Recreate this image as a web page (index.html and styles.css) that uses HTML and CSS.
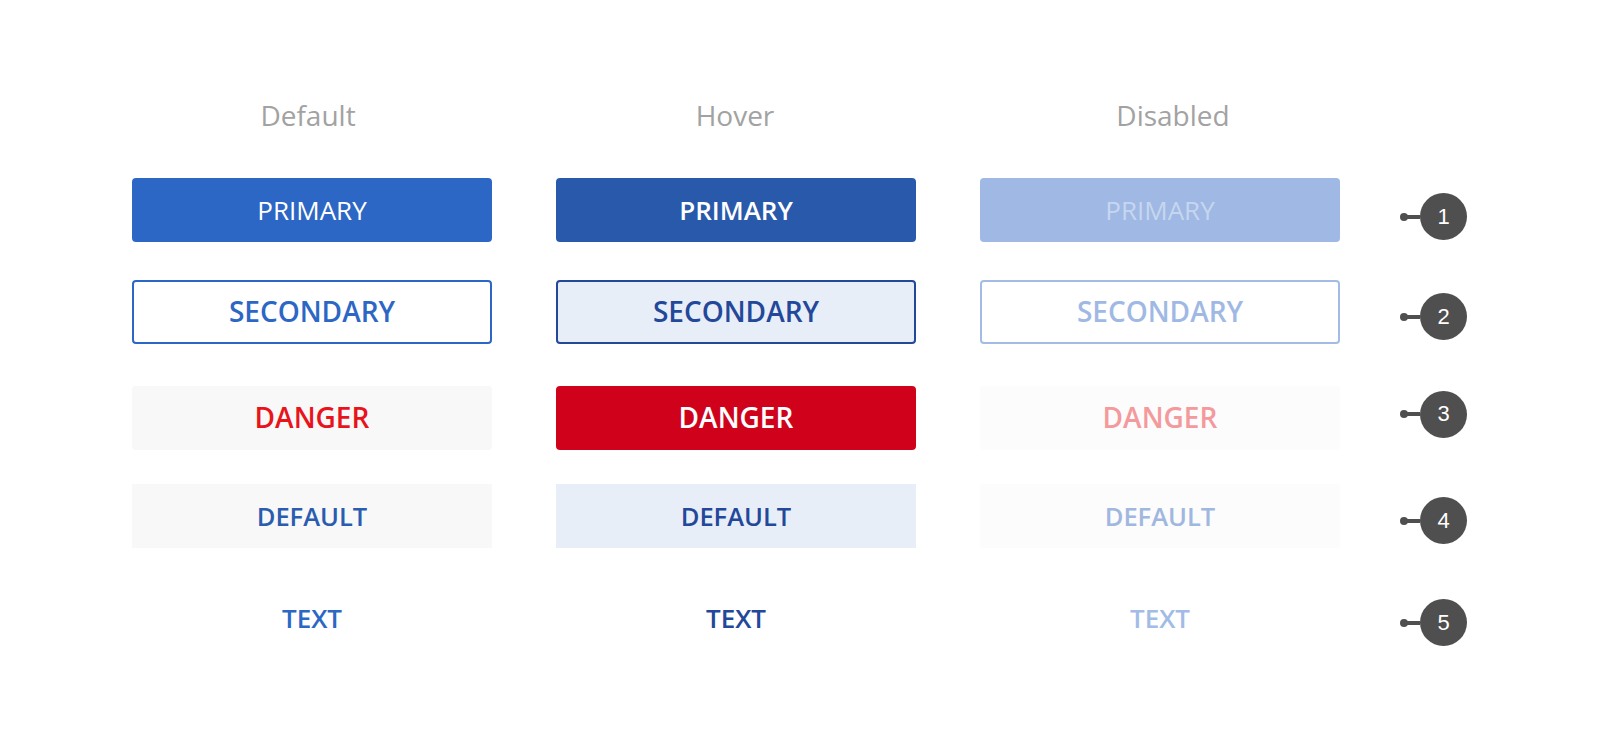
FILE: index.html
```html
<!DOCTYPE html>
<html lang="en">
<head>
<meta charset="utf-8">
<title>Button states</title>
<link rel="stylesheet" href="styles.css">
</head>
<body>
<main class="board">
  <div class="row heads">
    <div class="head head-default">Default</div>
    <div class="head head-hover">Hover</div>
    <div class="head head-disabled">Disabled</div>
  </div>

  <div class="row r1">
    <div class="btn primary">PRIMARY</div>
    <div class="btn primary hover">PRIMARY</div>
    <div class="btn primary disabled">PRIMARY</div>
    <div class="marker first"><span class="dot"></span><span class="stem"></span><span class="num">1</span></div>
  </div>

  <div class="row r2">
    <div class="btn secondary">SECONDARY</div>
    <div class="btn secondary hover">SECONDARY</div>
    <div class="btn secondary disabled">SECONDARY</div>
    <div class="marker down"><span class="dot"></span><span class="stem"></span><span class="num">2</span></div>
  </div>

  <div class="row r3">
    <div class="btn danger">DANGER</div>
    <div class="btn danger hover">DANGER</div>
    <div class="btn danger disabled">DANGER</div>
    <div class="marker up"><span class="dot"></span><span class="stem"></span><span class="num">3</span></div>
  </div>

  <div class="row r4">
    <div class="btn plain">DEFAULT</div>
    <div class="btn plain hover">DEFAULT</div>
    <div class="btn plain disabled">DEFAULT</div>
    <div class="marker down"><span class="dot"></span><span class="stem"></span><span class="num">4</span></div>
  </div>

  <div class="row r5">
    <div class="btn text">TEXT</div>
    <div class="btn text hover">TEXT</div>
    <div class="btn text disabled">TEXT</div>
    <div class="marker down"><span class="dot"></span><span class="stem"></span><span class="num">5</span></div>
  </div>
</main>
</body>
</html>
```

FILE: styles.css
```css
html, body {
  margin: 0;
  padding: 0;
  background: #ffffff;
}

body {
  font-family: "Open Sans", "Noto Sans", "Liberation Sans", sans-serif;
  width: 1600px;
  height: 744px;
  overflow: hidden;
}

.board {
  display: flex;
  flex-direction: column;
  padding: 97px 0 0 132px;
}

.row {
  display: grid;
  grid-template-columns: 360px 360px 360px 80px;
  column-gap: 64px;
  align-items: center;
}

.heads {
  height: 36px;
}

.head {
  font-size: 28px;
  line-height: 36px;
  color: #a2a2a2;
  text-align: center;
}

.head-default { margin-right: 8px; }
.head-hover { margin-right: 2px; }
.head-disabled { margin-left: 26px; }

.r1 { margin-top: 45px; }
.r2 { margin-top: 38px; }
.r3 { margin-top: 42px; }
.r4 { margin-top: 34px; }
.r5 { margin-top: 38px; }

.btn {
  box-sizing: border-box;
  height: 64px;
  display: flex;
  align-items: center;
  justify-content: center;
  font-size: 26px;
  font-weight: 600;
  border-radius: 4px;
  white-space: nowrap;
}

/* Primary */
.primary {
  background: #2c67c5;
  color: #ffffff;
  font-weight: 400;
}
.primary.hover {
  background: #2859ab;
  font-weight: 600;
}
.primary.disabled {
  background: #9fb9e4;
  color: #c7d6ef;
}

/* Secondary */
.secondary {
  background: #ffffff;
  border: 2px solid #2c67c5;
  color: #2c67c5;
  font-size: 28px;
  padding-bottom: 3px;
}
.secondary.hover {
  background: #e8eef8;
  border-color: #23489a;
  color: #23489a;
}
.secondary.disabled {
  border-color: #a2bce6;
  color: #9fb9e4;
}

/* Danger */
.danger {
  background: #f8f8f8;
  color: #e8131b;
  font-size: 28px;
  padding-bottom: 3px;
}
.danger.hover {
  background: #d0021b;
  color: #ffffff;
}
.danger.disabled {
  background: #fcfcfc;
  color: #f4999c;
}

/* Default */
.plain {
  background: #f8f8f8;
  color: #2a5caf;
  border-radius: 0;
  font-size: 25.5px;
}
.plain.hover {
  background: #e8eef8;
  color: #23489a;
}
.plain.disabled {
  background: #fcfcfc;
  color: #a0b7df;
  border-radius: 4px;
}

/* Text */
.text {
  background: transparent;
  color: #2c67c5;
}
.text.hover {
  color: #23489a;
}
.text.disabled {
  color: #a2bce6;
}

/* Markers */
.marker {
  display: flex;
  align-items: center;
  margin-left: -4px;
}
.marker.first { margin-top: 13px; }
.marker.down { margin-top: 9px; }
.marker.up { margin-bottom: 8px; }

.dot {
  width: 8px;
  height: 8px;
  border-radius: 50%;
  background: #4f4f4f;
  flex: none;
}
.stem {
  width: 14px;
  height: 4px;
  margin-left: -2px;
  background: #4f4f4f;
  flex: none;
}
.num {
  width: 47px;
  height: 47px;
  border-radius: 50%;
  background: #4f4f4f;
  color: #ffffff;
  font-family: "Liberation Sans", Arial, sans-serif;
  font-size: 22px;
  display: flex;
  align-items: center;
  justify-content: center;
  flex: none;
}
```
